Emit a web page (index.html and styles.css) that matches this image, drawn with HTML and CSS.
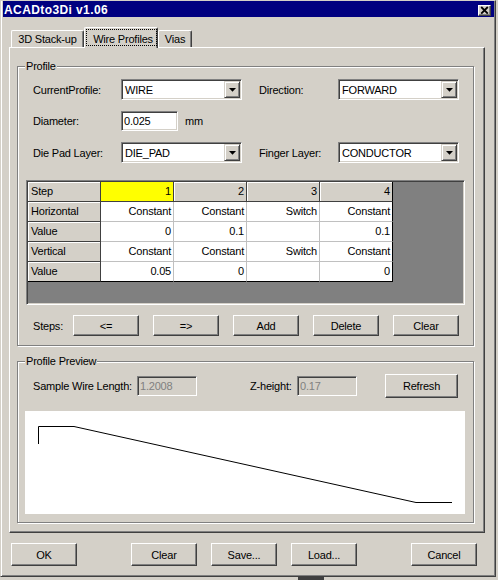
FILE: index.html
```html
<!DOCTYPE html>
<html>
<head>
<meta charset="utf-8">
<title>ACADto3Di v1.06</title>
<link rel="stylesheet" href="styles.css">
</head>
<body>
<div class="window">
  <div class="titlebar">
    <span class="title">ACADto3Di v1.06</span>
    <span class="close"><svg width="11" height="9" viewBox="0 0 11 9"><path d="M2.2 1 L8.8 7.6 M8.8 1 L2.2 7.6" stroke="#000" stroke-width="1.8" fill="none"/></svg></span>
  </div>
  <div class="tabs">
    <div class="tab t1">3D Stack-up</div>
    <div class="tab t2 active"><span class="focus">Wire Profiles</span></div>
    <div class="tab t3">Vias</div>
  </div>
  <div class="panel">
    <div class="group g1">
      <span class="legend">Profile</span>
      <div class="frow">
        <span class="lbl w1">CurrentProfile:</span>
        <div class="combo"><span class="ctext">WIRE</span><span class="dd"><svg width="7" height="4" viewBox="0 0 7 4"><polygon points="0,0 7,0 3.5,3.8" fill="#000"/></svg></span></div>
        <span class="lbl w2">Direction:</span>
        <div class="combo"><span class="ctext">FORWARD</span><span class="dd"><svg width="7" height="4" viewBox="0 0 7 4"><polygon points="0,0 7,0 3.5,3.8" fill="#000"/></svg></span></div>
      </div>
      <div class="frow r2">
        <span class="lbl w1">Diameter:</span>
        <div class="edit dia">0.025</div>
        <span class="unit">mm</span>
      </div>
      <div class="frow r3">
        <span class="lbl w1">Die Pad Layer:</span>
        <div class="combo"><span class="ctext">DIE_PAD</span><span class="dd"><svg width="7" height="4" viewBox="0 0 7 4"><polygon points="0,0 7,0 3.5,3.8" fill="#000"/></svg></span></div>
        <span class="lbl w2">Finger Layer:</span>
        <div class="combo"><span class="ctext">CONDUCTOR</span><span class="dd"><svg width="7" height="4" viewBox="0 0 7 4"><polygon points="0,0 7,0 3.5,3.8" fill="#000"/></svg></span></div>
      </div>
      <div class="grid">
        <div class="cells">
          <div class="c fx l">Step</div>
          <div class="c fx sel">1</div>
          <div class="c fx">2</div>
          <div class="c fx">3</div>
          <div class="c fx lc">4</div>

          <div class="c fx l">Horizontal</div>
          <div class="c">Constant</div>
          <div class="c">Constant</div>
          <div class="c">Switch</div>
          <div class="c lc">Constant</div>

          <div class="c fx l">Value</div>
          <div class="c">0</div>
          <div class="c">0.1</div>
          <div class="c"></div>
          <div class="c lc">0.1</div>

          <div class="c fx l">Vertical</div>
          <div class="c">Constant</div>
          <div class="c">Constant</div>
          <div class="c">Switch</div>
          <div class="c lc">Constant</div>

          <div class="c fx l lr">Value</div>
          <div class="c lr">0.05</div>
          <div class="c lr">0</div>
          <div class="c lr"></div>
          <div class="c lc lr">0</div>
        </div>
      </div>
      <div class="steps">
        <span class="lbl w3">Steps:</span>
        <div class="btn sbtn">&lt;=</div>
        <div class="btn sbtn">=&gt;</div>
        <div class="btn sbtn">Add</div>
        <div class="btn sbtn">Delete</div>
        <div class="btn sbtn">Clear</div>
      </div>
    </div>
    <div class="group g2">
      <span class="legend">Profile Preview</span>
      <div class="prow">
        <span class="lbl w4">Sample Wire Length:</span>
        <div class="edit dis">1.2008</div>
        <span class="lbl w5">Z-height:</span>
        <div class="edit dis">0.17</div>
        <div class="btn refresh">Refresh</div>
      </div>
      <div class="preview">
        <svg width="440" height="103" viewBox="0 0 440 103"><polyline points="13.5,33 13.5,15.5 49,15.5 391,91.5 427,91.5" fill="none" stroke="#000" stroke-width="1"/></svg>
      </div>
    </div>
  </div>
  <div class="bottom">
    <div class="btn bbtn">OK</div>
    <div class="btn bbtn far">Clear</div>
    <div class="btn bbtn near">Save...</div>
    <div class="btn bbtn near">Load...</div>
    <div class="btn bbtn far">Cancel</div>
  </div>
</div>
<div class="taskbit"></div>
</body>
</html>
```

FILE: styles.css
```css
* { box-sizing: border-box; }
html, body { margin: 0; padding: 0; background: #d4d0c8; }
body {
  font-family: "Liberation Sans", Arial, sans-serif;
  font-size: 11px;
  letter-spacing: -0.2px;
  color: #000;
  width: 498px;
  height: 580px;
  overflow: hidden;
  position: relative;
}

.window {
  width: 496px;
  height: 577px;
  background: #d4d0c8;
  border-top: 1px solid #d4d0c8;
  border-left: 1px solid #d4d0c8;
  border-right: 1px solid #404040;
  border-bottom: 1px solid #404040;
  box-shadow: inset 1px 0 #fff, inset -1px -1px #808080;
  padding: 0 1px 0 2px;
  display: flex;
  flex-direction: column;
}

.titlebar {
  height: 16px;
  background: #000080;
  color: #fff;
  display: flex;
  justify-content: space-between;
  align-items: flex-start;
  padding: 0 3px 0 1px;
}
.title {
  font-weight: bold;
  font-size: 12px;
  letter-spacing: 0.4px;
  line-height: 14px;
  padding-top: 2px;
}
.close {
  margin-top: 4px;
  width: 13px;
  height: 11px;
  background: #d4d0c8;
  border: 1px solid;
  border-color: #fff #404040 #404040 #fff;
  box-shadow: inset -1px -1px #808080;
  display: flex;
}
.close svg { display: block; }

.tabs {
  display: flex;
  align-items: flex-end;
  height: 20px;
  margin-top: 10px;
  margin-left: 8px;
  position: relative;
  z-index: 1;
}
.tab {
  height: 17px;
  background: #d4d0c8;
  border-top: 1px solid #fff;
  border-left: 1px solid #fff;
  border-right: 1px solid #404040;
  box-shadow: inset -1px 0 #808080;
  border-top-left-radius: 2px;
  border-top-right-radius: 2px;
  display: flex;
  align-items: flex-end;
  justify-content: center;
  padding-bottom: 2px;
  line-height: 12px;
}
.t1 { width: 73px; }
.t3 { width: 34px; }
.t2 {
  width: 74px;
  height: 21px;
  margin-bottom: -1px;
  align-items: flex-start;
  justify-content: flex-start;
  padding: 1px 0 0 1px;
}
.focus {
  width: 71px;
  height: 17px;
  border: 1px dotted #000;
  display: flex;
  align-items: flex-end;
  justify-content: center;
  padding-left: 3px;
  line-height: 12px;
}

.panel {
  margin-left: 6px;
  width: 476px;
  height: 486px;
  border: 1px solid;
  border-color: #fff #404040 #404040 #fff;
  box-shadow: inset -1px -1px #808080;
  padding: 18px 0 0 7px;
  display: flex;
  flex-direction: column;
  gap: 15px;
}

.group {
  position: relative;
  width: 457px;
  border: 1px solid #808080;
  box-shadow: inset 1px 1px #fff, 1px 1px #fff;
  padding-top: 12px;
}
.g1 { height: 280px; }
.g2 { height: 162px; }
.legend {
  position: absolute;
  top: -7px;
  left: 7px;
  padding: 0 1px;
  line-height: 13px;
  background: #d4d0c8;
}

.frow {
  display: flex;
  align-items: center;
  height: 21px;
  padding-left: 15px;
}
.r2 { height: 20px; margin-top: 11px; }
.r3 { margin-top: 11px; }
.lbl { white-space: nowrap; }
.w1 { width: 88px; }
.w2 { width: 79px; margin-left: 17px; }
.w3 { width: 40px; }
.w4 { width: 104px; }
.w5 { width: 47px; margin-left: 53px; }

.combo {
  width: 121px;
  height: 21px;
  background: #fff;
  border: 1px solid;
  border-color: #808080 #fff #fff #808080;
  box-shadow: inset 1px 1px #404040, inset -1px -1px #d4d0c8;
  padding: 1px;
  display: flex;
  align-items: center;
}
.ctext { flex: 1; padding-left: 2px; white-space: nowrap; }
.dd {
  width: 16px;
  height: 17px;
  background: #d4d0c8;
  border: 1px solid;
  border-color: #d4d0c8 #404040 #404040 #d4d0c8;
  box-shadow: inset 1px 1px #fff, inset -1px -1px #808080;
  display: flex;
  align-items: center;
  justify-content: center;
  padding-left: 1px;
}
.dd svg { display: block; }

.edit {
  height: 20px;
  background: #fff;
  border: 1px solid;
  border-color: #808080 #fff #fff #808080;
  box-shadow: inset 1px 1px #404040, inset -1px -1px #d4d0c8;
  padding-left: 2px;
  display: flex;
  align-items: center;
  white-space: nowrap;
}
.dia { width: 57px; }
.unit { margin-left: 7px; }
.edit.dis { width: 60px; background: #d4d0c8; color: #808080; }

.grid {
  margin-top: 17px;
  margin-left: 8px;
  width: 439px;
  height: 125px;
  background: #808080;
  border: 1px solid;
  border-color: #808080 #fff #fff #808080;
  box-shadow: inset 1px 1px #404040, inset -1px -1px #d4d0c8;
  padding: 1px;
}
.cells {
  display: grid;
  grid-template-columns: repeat(5, 73px);
  width: 365px;
}
.c {
  height: 20px;
  background: #fff;
  border-right: 1px solid #c0c0c0;
  border-bottom: 1px solid #c0c0c0;
  text-align: right;
  padding-right: 2px;
  line-height: 19px;
  white-space: nowrap;
  overflow: hidden;
}
.c.fx {
  background: #d4d0c8;
  border-color: #404040;
  box-shadow: inset 1px 1px #fff;
}
.c.l { text-align: left; padding-left: 3px; }
.c.sel { background: #ffff00; box-shadow: none; }
.c.lc { border-right-color: #000; }
.c.lr { border-bottom-color: #000; }

.steps {
  display: flex;
  align-items: center;
  height: 21px;
  margin-top: 10px;
  padding-left: 15px;
}
.btn {
  background: #d4d0c8;
  border: 1px solid;
  border-color: #fff #404040 #404040 #fff;
  box-shadow: inset -1px -1px #808080;
  display: flex;
  align-items: center;
  justify-content: center;
  white-space: nowrap;
}
.sbtn { width: 66px; height: 21px; margin-right: 14px; }

.prow {
  display: flex;
  align-items: center;
  height: 24px;
  padding-left: 15px;
}
.refresh { width: 73px; height: 24px; margin-left: 28px; }

.preview {
  margin-top: 13px;
  margin-left: 7px;
  width: 440px;
  height: 103px;
  background: #fff;
}
.preview svg { display: block; }

.bottom {
  display: flex;
  margin-top: 10px;
  padding-left: 8px;
}
.bbtn { width: 66px; height: 23px; }
.bbtn.far { margin-left: 54px; }
.bbtn.near { margin-left: 14px; }

.taskbit {
  position: absolute;
  left: 298px;
  top: 577px;
  width: 26px;
  height: 3px;
  background: #404040;
}
```
